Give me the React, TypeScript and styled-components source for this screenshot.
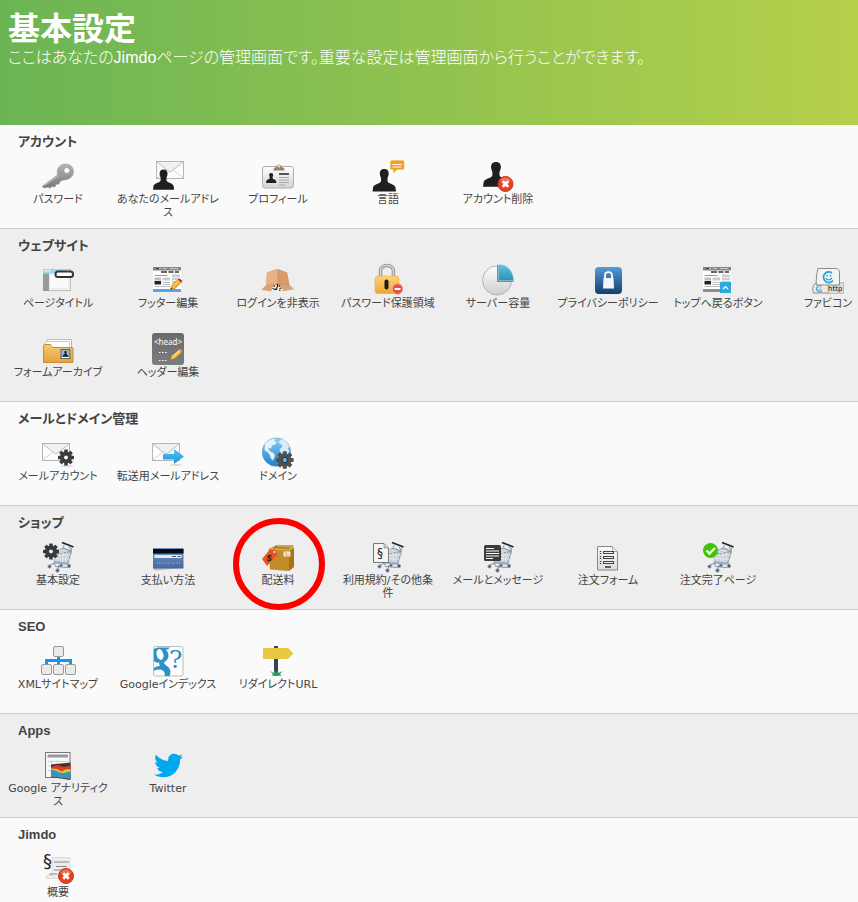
import React from "react";
import styled, { createGlobalStyle } from "styled-components";
import { FaTwitter } from "react-icons/fa";

const GlobalStyle = createGlobalStyle`
  * { box-sizing: border-box; }
  html, body { margin: 0; padding: 0; }
  body {
    overflow-x: hidden;
    font-family: "DejaVu Sans", "Noto Sans CJK JP", sans-serif;
    font-size: 11px;
    color: #444;
    background: #fafafa;
    font-feature-settings: "palt";
  }
`;

const Page = styled.main`
  display: flex;
  flex-direction: column;
  min-height: 100vh;
  overflow-x: hidden;
`;

const Banner = styled.header`
  padding: 8px 8px 54px;
  color: #fff;
  background: linear-gradient(to right, #6bb554, #b6d04b);
`;

const Title = styled.h1`
  margin: 0;
  font: 700 32px/37px "Noto Sans CJK JP", sans-serif;
  font-feature-settings: normal;
`;

const Lead = styled.p`
  margin: 0;
  font: 300 16px/26px "Liberation Sans", "Noto Sans CJK JP", sans-serif;
  font-feature-settings: "palt";
`;

const Section = styled.section<{ $shaded: boolean }>`
  padding-top: 9px;
  background: ${(p) => (p.$shaded ? "#eee" : "#fafafa")};
  border-bottom: 1px solid #ccc;

  &:last-child {
    flex: 1;
    border-bottom: 0;
  }
`;

const SectionTitle = styled.h2`
  margin: 0 18px 10px;
  font: 700 13px/16px "Liberation Sans", "Noto Sans CJK JP", sans-serif;
  font-feature-settings: "palt";
  color: #444;
`;

const ItemList = styled.ul<{ $last: boolean }>`
  display: grid;
  grid-template-columns: repeat(8, 110px);
  grid-auto-rows: ${(p) => (p.$last ? "48px" : "68px")};
  row-gap: 1px;
  margin: 0;
  padding: 0 0 0 3px;
  list-style: none;
`;

const Item = styled.li`
  position: relative;
`;

const ItemLink = styled.a`
  display: flex;
  flex-direction: column;
  align-items: center;
  gap: 1px;
  color: #444;
  text-decoration: none;

  & > svg {
    flex: none;
    overflow: visible;
  }
`;

const Label = styled.span`
  line-height: 13px;
  text-align: center;
  white-space: pre-line;
`;

const Ring = styled.span`
  position: absolute;
  z-index: 2;
  left: 50%;
  top: 23px;
  width: 92px;
  height: 92px;
  margin: -46px 0 0 -45px;
  border: 6px solid #f00;
  border-radius: 50%;
  pointer-events: none;
`;

const Svg = ({ children }: { children: React.ReactNode }) => (
  <svg width="32" height="32" viewBox="0 0 32 32" aria-hidden="true">
    {children}
  </svg>
);

const Gradient = ({ id, from, to }: { id: string; from: string; to: string }) => (
  <linearGradient id={id} x1="0" y1="0" x2="0" y2="1">
    <stop offset="0" stopColor={from} />
    <stop offset="1" stopColor={to} />
  </linearGradient>
);

const Person = ({ x, y, s }: { x: number; y: number; s: number }) => (
  <path
    transform={`translate(${x} ${y}) scale(${s})`}
    d="M12 0c-3 0-4.8 2-4.5 5.200.1 1.800.7 2.700 1 3.600.3 1.200.5 3-.1 4.200C7.500 15 1.500 15.500.6 18.500L0 23h24l-.6-4.500c-.9-3-6.900-3.500-7.800-5.500-.6-1.200-.4-3-.1-4.200.3-.9.900-1.800 1-3.600C16.800 2 15 0 12 0z"
    fill="#1d1f20"
  />
);

const Envelope = ({ x, y }: { x: number; y: number }) => (
  <g transform={`translate(${x} ${y})`}>
    <rect x=".5" y=".5" width="27" height="17" fill="#fcfcfc" stroke="#b5b5b5" />
    <path d="M1 17l9.500-8M27 17l-9.500-8" stroke="#d6d6d6" fill="none" />
    <path d="M1 1l12 9.500c.7.500 1.300.5 2 0L27 1" stroke="#b9b9b9" fill="#f1f1f1" />
  </g>
);

const Gear = ({ cx, cy, r, color, hole }: { cx: number; cy: number; r: number; color: string; hole: string }) => (
  <g transform={`translate(${cx} ${cy}) scale(${r / 8})`}>
    {[0, 45, 90, 135].map((a) => (
      <rect key={a} x="-1.8" y="-8" width="3.6" height="16" rx=".6" fill={color} transform={`rotate(${a})`} />
    ))}
    <circle r="6" fill={color} />
    <circle r="2.4" fill={hole} stroke="#222" strokeWidth=".8" />
  </g>
);

const RedCross = ({ cx, cy }: { cx: number; cy: number }) => (
  <g transform={`translate(${cx} ${cy})`}>
    <circle r="7.500" fill="#e5401f" stroke="#c5371c" />
    <path d="M-5.500-3.500a6.500 6.500 0 0 1 11 0C3-1-3-1-5.500-3.500z" fill="#f0704f" />
    <path d="M-2.800-2.800l5.600 5.600M2.800-2.800l-5.600 5.600" stroke="#fff" strokeWidth="2.8" />
  </g>
);

const Pencil = ({ x, y }: { x: number; y: number }) => (
  <g transform={`translate(${x} ${y})`}>
    <path d="M0 11l1.500-4.500L7.500 1l3.200 3-6 6z" fill="#f8b42c" stroke="#b87a1c" strokeWidth=".6" />
    <path d="M2.500 7.500l6-5.500" stroke="#ffe18a" />
    <path d="M7.500 1L9 0l3 2.500-1.300 1.500z" fill="#d3201f" />
    <path d="M0 11l.7-2 1.400 1.300z" fill="#333" />
  </g>
);

const Cart = () => (
  <g>
    <path d="M10 11l2 9.500 14 1 3.500-11-7-3.500z" fill="#c4cdd6" />
    <path d="M12 20.500l1.500 5 12 1M26 21.500l3.500-11L27 5.500M10 11l12-4 7.500 3.500L14 13z" stroke="#8694a3" fill="none" />
    <path d="M14 13l2 8M17.500 12.500l1.200 8.500M21 12v9.500M24.500 11.500l-1 10M10.500 14.500l18-.5M11.500 17.500l16 .5M13 10l9 2M17 8.500l8 2.700" stroke="#e8edf1" strokeWidth=".8" fill="none" />
    <path d="M20 1.500l11.500 4.500" stroke="#222" strokeWidth="1.6" />
    <path d="M22.500 3l-1.500 4M30 6l-1.500 5" stroke="#9aa5b0" />
    <path d="M12 20l14 1.500-.8 2.500-12.500-1.500z" fill="#9cabbd" />
    <g fill="#4b5b72" stroke="#8f9db1" strokeWidth=".8">
      <circle cx="7.500" cy="25.500" r="1.600" />
      <circle cx="15.500" cy="29.500" r="1.700" />
      <circle cx="19" cy="24.500" r="1.400" />
      <circle cx="27" cy="25" r="1.700" />
    </g>
    <path d="M8 24l5-2M16 28l1-4M26.500 23l-1-2" stroke="#7d8ba0" />
  </g>
);

const WebPage = ({ bottom }: { bottom: string }) => (
  <g>
    <rect x="1" y="3" width="28" height="25" fill="#fff" />
    <rect x="1" y="3" width="28" height="3.500" fill="#858585" />
    <path d="M4 4.500h5M11 4.500h4M18 4.500h8" stroke="#c9c9c9" />
    <path d="M4 4.500h3" stroke="#333" />
    <path d="M9 8h6M16.500 8h5M23 8h4" stroke="#333" strokeWidth="1.5" />
    <path d="M2.500 11.500h13" stroke="#999" />
    <rect x="2.500" y="13.500" width="6.500" height="3" fill="#bbb" />
    <rect x="2.500" y="17" width="6.500" height="3.500" fill="#222" />
    <rect x="10.500" y="13.500" width="7.500" height="3" fill="#ccc" />
    <path d="M10.500 18.500h7.500M10.500 20.500h7.500M2.500 22.500h16" stroke="#bbb" />
    <rect x="20" y="10.500" width="8" height="9" fill="#cdcdcd" />
    <path d="M20 13.500h8M20 16.500h8" stroke="#eee" />
    <rect x="1" y="25" width="28" height="3" fill={bottom} />
  </g>
);

const Face = ({ cx, cy, r }: { cx: number; cy: number; r: number }) => (
  <g transform={`translate(${cx} ${cy}) scale(${r / 5.5})`} fill="none" stroke="#2ba3df" strokeWidth="1.8">
    <path d="M3.500-4A5.300 5.300 0 1 0 4.500 3.500" />
    <path d="M-2.500.8c.7 2.800 4.700 2.800 5.700 0M-1.500-2v1.500M2-2v1.500" strokeWidth="1.4" />
  </g>
);

const KeyIcon = () => (
  <Svg>
    <defs><Gradient id="key" from="#b4b4b4" to="#777" /></defs>
    <path d="M0 26.500L15.500 15C14 8 18 4 23.500 4c5 0 8 3.500 8 7.500 0 5.500-4.500 8.500-10 8.500l-3.500 1.500-1 2.500-3 .5-1 2.500-3-.5-2.500 2-1-1.500-4 1z" fill="url(#key)" stroke="#999" strokeWidth=".5" />
    <path d="M2 26l15-10.500" stroke="#c2c2c2" />
    <circle cx="24.8" cy="10.500" r="3" fill="#fafafa" stroke="#888" strokeWidth=".6" />
  </Svg>
);

const MailUserIcon = () => (
  <Svg><Envelope x={4} y={1} /><Person x={1} y={9.5} s={0.88} /></Svg>
);

const ProfileIcon = () => (
  <Svg>
    <defs><Gradient id="card" from="#fff" to="#d4d4d4" /></defs>
    <rect x=".5" y="6.500" width="31" height="21.500" rx="2.500" fill="url(#card)" stroke="#aeaeae" />
    <Person x={4} y={13} s={0.43} />
    <path d="M17 14h10" stroke="#555" strokeWidth="2" />
    <path d="M17 17.500h10M17 20h10M17 22.500h10M17 25h6" stroke="#aaa" />
    <path d="M11.500 10.500c0-3 1.500-3 3-3.500C14.500 3.500 19.500 3.500 19.500 7c1.500.5 3 .5 3 3.500z" fill="#9b8463" />
    <circle cx="17" cy="6.200" r="1.200" fill="#e8e0d2" />
  </Svg>
);

const LanguageIcon = () => (
  <Svg>
    <Person x={0.5} y={9} s={0.98} />
    <path d="M20 .5h10.500a1.500 1.500 0 0 1 1.500 1.500v6a1.500 1.500 0 0 1-1.500 1.500H25L21.500 13v-3.500H20A1.500 1.500 0 0 1 18.500 8V2A1.500 1.500 0 0 1 20 .5z" fill="#f6a01f" stroke="#f3b24b" strokeWidth=".5" />
    <path d="M20.500 4.500H30M20.500 7H29" stroke="#fff" />
  </Svg>
);

const UserDeleteIcon = () => (
  <Svg><Person x={1} y={2} s={1.08} /><RedCross cx={23.5} cy={24} /></Svg>
);

const PageTitleIcon = () => (
  <Svg>
    <rect x="1.500" y="5.500" width="27" height="21" fill="#f3f3f3" stroke="#bbb" />
    <rect x="1" y="5" width="24" height="4.500" fill="#95d9ef" />
    <rect x="2" y="6" width="7" height="1.500" fill="#d3f1fa" />
    <rect x="1" y="9.500" width="6" height="17.500" fill="#999" />
    <rect x="7.500" y="10.500" width="19" height="14" fill="#fafafa" stroke="#ddd" strokeWidth=".5" />
    <rect x="13.500" y="7.500" width="17.500" height="5.500" rx="2.500" fill="#fff" stroke="#333" strokeWidth="2" />
  </Svg>
);

const FooterIcon = () => (
  <Svg><WebPage bottom="#57a5e4" /><Pencil x={18.5} y={14.5} /></Svg>
);

const HideLoginIcon = () => (
  <Svg>
    <path d="M5 8.500L15.500 5l9.500 3.500 3 15-24-.5z" fill="#d89a66" />
    <path d="M5 8.500L15.500 5v15.500L4 23.500z" fill="#e7b385" />
    <path d="M15.500 5L25 8.500l2.500 14-12-2z" fill="#d79a68" />
    <path d="M4 21.500l11.500-2L9 27 0 25.500zM15.500 19.500l12 2L31.500 25 20 27z" fill="#dca476" stroke="#c18759" strokeWidth=".5" />
    <path d="M9.500 27c0-7 9-8.500 11.500 0z" fill="#f4f1ec" />
    <path d="M10.500 24.500l2 .5M11.500 22l1.500.5M15.500 20v3M18 21.500l-1 1M19.500 24l-2 .5M12.500 26l1.500-1M17 26l1.500.5M15 23l-.5 3" stroke="#161616" strokeWidth="1.200" />
  </Svg>
);

const LockIcon = () => (
  <Svg>
    <defs><Gradient id="gold" from="#ffd279" to="#f0a62c" /></defs>
    <path d="M8.500 13V7c0-7.500 13-7.500 13 0v6" fill="none" stroke="#8d8d8d" strokeWidth="3.5" />
    <path d="M8.500 13V7c0-7.500 13-7.500 13 0v6" fill="none" stroke="#d5d5d5" strokeWidth="1.8" />
    <rect x="3" y="12" width="24" height="17.500" rx="3" fill="url(#gold)" stroke="#dfa23b" strokeWidth=".5" />
    <rect x="12.500" y="15.500" width="4" height="10" rx="2" fill="#1e1a13" />
    <circle cx="25.500" cy="25" r="5.300" fill="#e65143" stroke="#f2a29a" />
    <path d="M22.500 25h6" stroke="#fff" strokeWidth="2" />
  </Svg>
);

const StorageIcon = () => (
  <Svg>
    <defs><Gradient id="disk" from="#fff" to="#cdcdcd" /><Gradient id="wedge" from="#65bfdd" to="#2c92bd" /></defs>
    <circle cx="15" cy="16.500" r="14.500" fill="url(#disk)" stroke="#b5b5b5" />
    <path d="M15 18V1C25 1 31.500 7.500 31.500 18z" fill="#888" />
    <path d="M16.500 16.500V.5c8.500 0 15 6 15 16z" fill="url(#wedge)" stroke="#a3dcee" strokeWidth=".5" />
  </Svg>
);

const PrivacyIcon = () => (
  <Svg>
    <defs><Gradient id="privacy" from="#559bd5" to="#123f70" /></defs>
    <rect x="3" y="3" width="27" height="27" rx="4" fill="url(#privacy)" />
    <path d="M13 15v-3.500c0-4.500 7-4.500 7 0V15" fill="none" stroke="#fff" strokeWidth="1.8" />
    <path d="M11.500 14h10l.5 10.500h-11z" fill="#f4f6f8" />
  </Svg>
);

const BackToTopIcon = () => (
  <Svg>
    <WebPage bottom="#8d8d8d" />
    <rect x="18" y="18" width="11" height="11" fill="#2fa8df" />
    <path d="M21 25l2.500-2.500L26 25" stroke="#fff" strokeWidth="1.2" fill="none" />
  </Svg>
);

const FaviconIcon = () => (
  <Svg>
    <path d="M3 19.500h15v9.500H1.500c-1.500-4-.5-8 1.500-9.500z" fill="#ece9e2" stroke="#8c8a85" />
    <Face cx={7.5} cy={24.5} r={3.2} />
    <rect x="16" y="18.500" width="15.500" height="11" fill="#dcdcda" stroke="#999" strokeWidth=".5" />
    <text x="16" y="27" fontFamily="DejaVu Sans, sans-serif" fontSize="7" fill="#111">http</text>
    <path d="M6 4.500h19l2.500 2.500v14H4.500c-1-4 .5-12 1.500-16.500z" fill="#f6f4ef" stroke="#8f8c86" />
    <Face cx={16.5} cy={13} r={5.5} />
  </Svg>
);

const FolderIcon = () => (
  <Svg>
    <defs><Gradient id="folder" from="#f9c970" to="#e3a23d" /></defs>
    <path d="M5.500 6.500h24v8h-24z" fill="#fff" stroke="#bbb" />
    <path d="M3.500 8.500h24v8h-24z" fill="#fff" stroke="#ccc" />
    <path d="M1.500 12.500a1 1 0 0 1 1-1h6l2 3H30a1 1 0 0 1 1 1v14H1.500z" fill="url(#folder)" stroke="#c88d34" />
    <rect x="19" y="16.500" width="9" height="9" fill="#8fb6d6" stroke="#666" />
    <Person x={20.5} y={18} s={0.25} />
    <path d="M20 24.500h7" stroke="#fff" />
  </Svg>
);

const HeadIcon = () => (
  <Svg>
    <defs><Gradient id="head" from="#6b6b6b" to="#7d7d7d" /></defs>
    <rect width="32" height="32" rx="3" fill="url(#head)" />
    <text x="16" y="12" fontFamily="Noto Sans, sans-serif" fontSize="8" fill="#fff" textAnchor="middle">&lt;head&gt;</text>
    <path d="M7 19.500h8M7 27.500h8" stroke="#fff" strokeDasharray="1.5 1.5" />
    <path d="M18 27l1.500-4 7.500-6.500 3 2.500-7 6.500z" fill="#f5c04c" stroke="#a9731a" strokeWidth=".6" />
    <path d="M20.500 23.500l7-6" stroke="#fff0b3" />
    <path d="M27 16.500l1.200-.8 2.500 2.300-.7 1z" fill="#e28a8a" />
  </Svg>
);

const MailGearIcon = () => (
  <Svg>
    <Envelope x={0} y={6} />
    <ellipse cx="25" cy="29" rx="6" ry="1" fill="#ddd" />
    <Gear cx={24} cy={20.5} r={8} color="#3c3c3c" hole="#fff" />
  </Svg>
);

const MailForwardIcon = () => (
  <Svg>
    <defs><Gradient id="arrow" from="#56c2f1" to="#1697dc" /></defs>
    <Envelope x={0} y={6} />
    <ellipse cx="24" cy="28" rx="6" ry="1" fill="#ddd" />
    <path d="M11 17h11v-5l10 7.500L22 27v-4.500H11z" fill="url(#arrow)" />
  </Svg>
);

const GlobeIcon = () => (
  <Svg>
    <defs><Gradient id="globe" from="#8ecbf1" to="#1f82d0" /></defs>
    <circle cx="14.500" cy="15" r="14.500" fill="url(#globe)" />
    <path d="M3 7c3-4 7-5.500 11-5l-2 2 3 1-2 2.500-3 1-1 3-3-1 2 4 3 1 2 3-2 5c-3-2-2.500-5-4-7L2.500 13z" fill="#e4f2fa" />
    <path d="M16 5l4-3c3 1.500 6 4 7.500 8l-2 1 2 3-2 4-3-2-3 1-2-4 3-4-2-2z" fill="#d7ecf8" />
    <Gear cx={22.8} cy={23} r={8.8} color="#505050" hole="#62b7ed" />
  </Svg>
);

const CartGearIcon = () => (
  <Svg><Cart /><Gear cx={9} cy={10.5} r={8} color="#333b40" hole="#eee" /></Svg>
);

const CreditCardIcon = () => (
  <Svg>
    <defs><Gradient id="credit" from="#7395cf" to="#45689f" /></defs>
    <path d="M1 27h30l-28 2.500z" fill="#bbb" />
    <rect x="1" y="7" width="30.500" height="20.500" fill="url(#credit)" />
    <rect x="1" y="8" width="30.500" height="4.500" fill="#090909" />
    <rect x="2.500" y="14" width="27" height="3" fill="#dfe8f4" />
    <path d="M20 15.500h4M25.500 15.500h3" stroke="#555" />
    <path d="M5 22h5M12 22h5M19 22h4M25 22h3" stroke="#9db3d5" strokeDasharray="1 1" />
  </Svg>
);

const ShippingIcon = () => (
  <Svg>
    <path d="M6.500 8L14 4h17.500v3.500L27 10H7z" fill="#d1a447" />
    <path d="M6.500 8.500L27 10v20l-19-1.500z" fill="#c28b28" />
    <path d="M27 10l5-3v19l-5 4z" fill="#a97217" />
    <path d="M12 6.500l16 .5M11 8.500l4-3.500" stroke="#8c641e" strokeWidth=".8" />
    <rect x="21.500" y="10.500" width="7" height="5" fill="#f4e9d4" />
    <path d="M23 12h2M23 14h4" stroke="#c79a63" strokeWidth=".8" />
    <path d="M0 18L8 8.500l6.500 1 .5 4.500-10 11z" fill="#ef5220" />
    <circle cx="12.500" cy="11" r="1" fill="#eee" />
    <text x="4.500" y="20" fontFamily="Liberation Sans, sans-serif" fontStyle="italic" fontWeight="700" fontSize="9" fill="#222">$</text>
  </Svg>
);

const TermsIcon = () => (
  <Svg>
    <Cart />
    <path d="M1.500 2.500h10.500l4.500 4.500v14.500h-15z" fill="#f4f4f4" stroke="#777" />
    <path d="M12 2.500V7h4.500" fill="#ccc" stroke="#888" strokeWidth=".7" />
    <text x="5" y="16" fontFamily="DejaVu Sans, sans-serif" fontSize="12" fill="#222">§</text>
  </Svg>
);

const MessageIcon = () => (
  <Svg>
    <Cart />
    <rect x="2" y="4" width="17" height="16" rx="1.500" fill="#3b3b3b" />
    <path d="M4 7.500h8M4 10h13M4 12.500h13M4 15h13M4 17.500h7" stroke="#fff" />
  </Svg>
);

const OrderFormIcon = () => (
  <Svg>
    <defs><Gradient id="form" from="#fafafa" to="#ddd" /></defs>
    <path d="M5.500 5.500h15l5 5v18.500h-20z" fill="url(#form)" stroke="#888" />
    <path d="M20.500 5.500v5h5" fill="#eee" stroke="#aaa" />
    <g fill="#eee" stroke="#444">
      <rect x="11.500" y="10.500" width="10" height="2" />
      <rect x="11.500" y="15.500" width="10" height="2" />
      <rect x="11.500" y="20.500" width="10" height="2" />
    </g>
    <path d="M8.500 10v3M8.500 15v3M8.500 20v3" stroke="#333" strokeDasharray="1 1" strokeWidth="1.5" />
    <path d="M13 26h6" stroke="#333" strokeWidth="1.5" />
  </Svg>
);

const OrderDoneIcon = () => (
  <Svg>
    <Cart />
    <circle cx="8.500" cy="9.500" r="7.500" fill="#3fc40a" />
    <path d="M4.500 9.500l3 3L13 7" stroke="#fff" strokeWidth="2.300" fill="none" />
  </Svg>
);

const SitemapIcon = () => (
  <Svg>
    <path d="M4.500 20v-4.500h24V20M16.500 12v8" fill="none" stroke="#0c9af7" strokeWidth="3" />
    <g fill="#ebebeb" stroke="#999">
      <rect x="11.500" y="1.500" width="10" height="10" rx="1.500" />
      <rect x="-.5" y="19.500" width="10" height="10" rx="1.500" />
      <rect x="11.500" y="19.500" width="10" height="10" rx="1.500" />
      <rect x="23.500" y="19.500" width="10" height="10" rx="1.500" />
    </g>
  </Svg>
);

const GoogleIcon = () => (
  <Svg>
    <rect x="1.500" y="1.500" width="29.500" height="29.500" rx="2" fill="#fdfdfd" stroke="#bbb" />
    <path d="M2 4C4 2.500 6 2.500 8 2.500h10l-2 2h-2.500c2 1.500 3 3.500 3 6 0 5-4 5.500-4.500 7.500 0 2.500 6.500 3 6.500 9 0 1.500-.5 2.800-1 4h-5c1.500-5-3-7-6-6.500-2 0-3.500.5-4.500 1.500v-3c2-1.500 4.500-2 6-2-1-1.500-1-2.500-.5-3.500-3 .5-5-.5-5.500-1.500z" fill="#2b91c9" />
    <ellipse cx="8" cy="9.500" rx="3.400" ry="5.500" fill="#fdfdfd" transform="rotate(-14 8 9.500)" />
    <text x="17" y="23" fontFamily="DejaVu Serif, serif" fontSize="25" fill="#2b91c9">?</text>
  </Svg>
);

const RedirectIcon = () => (
  <Svg>
    <rect x="12" y="1" width="4" height="28" fill="#36435a" />
    <path d="M1 3h25l5.500 5.500L26 14H1z" fill="#e9c740" />
    <path d="M8 26l4 2 .5-3 1.500 3 2-3 .5 3 4-2-2.500 3 1.500 1.500-5 .5-5-.5 1.500-1.500z" fill="#269b62" />
  </Svg>
);

const AnalyticsIcon = () => (
  <Svg>
    <rect x="3.500" y="3.500" width="24.500" height="25" fill="#f7f7f7" stroke="#777" />
    <rect x="5.500" y="5.500" width="20.500" height="3" fill="#999" />
    <path d="M6 12.500h20M6 17h20M6 21.500h6M10 11v15M15 11v5" stroke="#d1d1d1" />
    <path d="M9 15.500l19.500-2V31L9 28z" fill="#3f3333" />
    <path d="M9 18l6-2 7 2 6.500-1.500V23L9 23z" fill="#e2362e" />
    <path d="M9 19.500l6 .5 5 2.500 3-2 5.500-.5V25L9 24z" fill="#bad431" />
    <path d="M9 20.500l4 1 7 3 8.500-2V30L9 27.500z" fill="#3a92bd" />
  </Svg>
);

const SummaryIcon = () => (
  <Svg>
    <path d="M10 4.500h18v17l-3 4H4.500v-3H10z" fill="#eee" stroke="#ccc" strokeWidth=".6" />
    <path d="M12 9h15M14 13.500h11M12 17h10M7 21h8" stroke="#888" />
    <text x="1" y="14" fontFamily="DejaVu Sans, sans-serif" fontSize="18" fill="#222">§</text>
    <RedCross cx={24} cy={23} />
  </Svg>
);

const TwitterBox = styled.span`
  display: flex;
  align-items: center;
  justify-content: center;
  width: 32px;
  height: 32px;
`;

const TwitterIcon = () => (
  <TwitterBox>
    <FaTwitter size={29} color="#00a9ee" aria-hidden="true" />
  </TwitterBox>
);

type Entry = { label: string; icon: React.ComponentType; ringed?: boolean };

const sections: { title: string; items: Entry[] }[] = [
  {
    title: "アカウント",
    items: [
      { label: "パスワード", icon: KeyIcon },
      { label: "あなたのメールアドレ\nス", icon: MailUserIcon },
      { label: "プロフィール", icon: ProfileIcon },
      { label: "言語", icon: LanguageIcon },
      { label: "アカウント削除", icon: UserDeleteIcon },
    ],
  },
  {
    title: "ウェブサイト",
    items: [
      { label: "ページタイトル", icon: PageTitleIcon },
      { label: "フッター編集", icon: FooterIcon },
      { label: "ログインを非表示", icon: HideLoginIcon },
      { label: "パスワード保護領域", icon: LockIcon },
      { label: "サーバー容量", icon: StorageIcon },
      { label: "プライバシーポリシー", icon: PrivacyIcon },
      { label: "トップへ戻るボタン", icon: BackToTopIcon },
      { label: "ファビコン", icon: FaviconIcon },
      { label: "フォームアーカイブ", icon: FolderIcon },
      { label: "ヘッダー編集", icon: HeadIcon },
    ],
  },
  {
    title: "メールとドメイン管理",
    items: [
      { label: "メールアカウント", icon: MailGearIcon },
      { label: "転送用メールアドレス", icon: MailForwardIcon },
      { label: "ドメイン", icon: GlobeIcon },
    ],
  },
  {
    title: "ショップ",
    items: [
      { label: "基本設定", icon: CartGearIcon },
      { label: "支払い方法", icon: CreditCardIcon },
      { label: "配送料", icon: ShippingIcon, ringed: true },
      { label: "利用規約/その他条\n件", icon: TermsIcon },
      { label: "メールとメッセージ", icon: MessageIcon },
      { label: "注文フォーム", icon: OrderFormIcon },
      { label: "注文完了ページ", icon: OrderDoneIcon },
    ],
  },
  {
    title: "SEO",
    items: [
      { label: "XMLサイトマップ", icon: SitemapIcon },
      { label: "Googleインデックス", icon: GoogleIcon },
      { label: "リダイレクトURL", icon: RedirectIcon },
    ],
  },
  {
    title: "Apps",
    items: [
      { label: "Google アナリティク\nス", icon: AnalyticsIcon },
      { label: "Twitter", icon: TwitterIcon },
    ],
  },
  { title: "Jimdo", items: [{ label: "概要", icon: SummaryIcon }] },
];

export default function App() {
  return (
    <>
      <GlobalStyle />
      <Page>
        <Banner>
          <Title>基本設定</Title>
          <Lead>ここはあなたのJimdoページの管理画面です。重要な設定は管理画面から行うことができます。</Lead>
        </Banner>
        {sections.map((section, index) => (
          <Section key={section.title} $shaded={index % 2 === 1}>
            <SectionTitle>{section.title}</SectionTitle>
            <ItemList $last={index === sections.length - 1}>
              {section.items.map(({ label, icon: Icon, ringed }) => (
                <Item key={label}>
                  <ItemLink href="#">
                    <Icon />
                    <Label>{label}</Label>
                  </ItemLink>
                  {ringed && <Ring />}
                </Item>
              ))}
            </ItemList>
          </Section>
        ))}
      </Page>
    </>
  );
}
